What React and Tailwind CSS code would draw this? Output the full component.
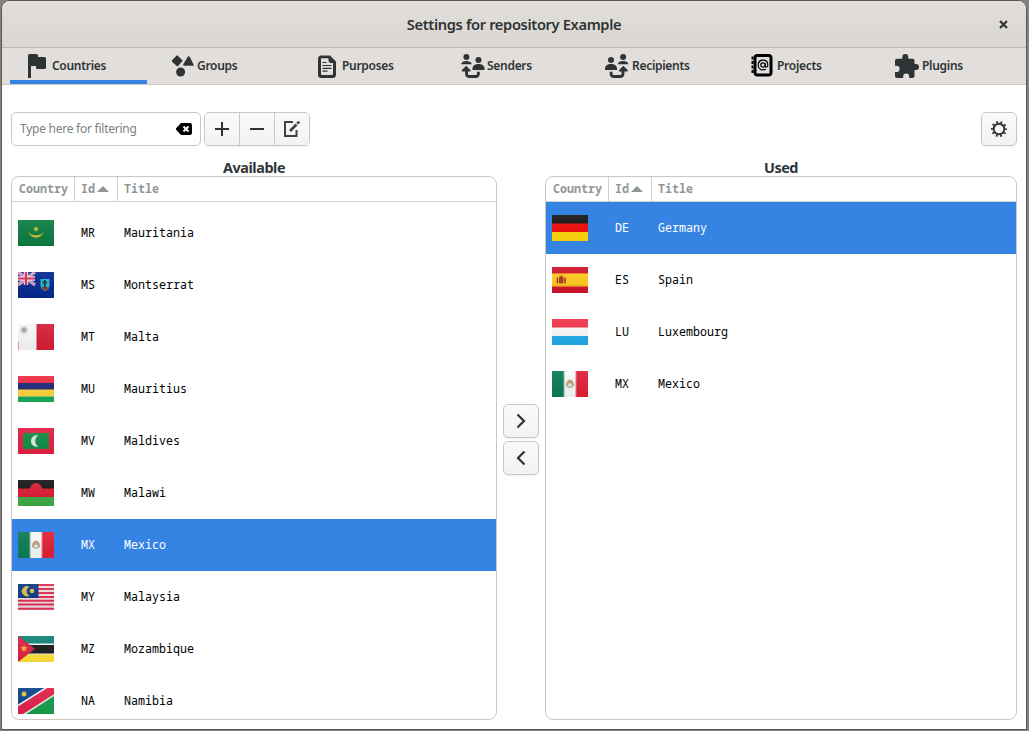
const MONO = "font-['Noto_Sans_Mono','DejaVu_Sans_Mono',monospace]";
const NARROW = 'inline-block origin-left scale-x-[0.932] text-[12.5px] leading-4 whitespace-nowrap';

function TabIcon({ name, className }) {
  return (
    <svg width="24" height="24" viewBox="0 0 24 24" fill="#2e3436" className={`shrink-0 ${className}`}>
      {name === 'flag' && <path d="M1 1.500a1.500 1.500 0 0 1 1.500-1.500H9.500a1.500 1.500 0 0 1 1.500 1.500V3H17.500a1.500 1.500 0 0 1 1.500 1.500V13.500a1.500 1.500 0 0 1-1.500 1.500H10.500a1.500 1.500 0 0 1-1.500-1.500V12H4V24H1z" />}
      {name === 'groups' && (
        <>
          <path d="M5.300 1.300 10.300 6.300a.7.7 0 0 1 0 1L6.300 11.700a1.200 1.200 0 0 1-1.800 0L-.2 7.500a.7.7 0 0 1 0-1L4.400 1.700a1.200 1.200 0 0 1 .9-.4z" />
          <path d="M15.600 3a1.200 1.200 0 0 1 2.200 0L21.500 10.200a1 1 0 0 1-.9 1.600H12.200a1 1 0 0 1-.9-1.600z" />
          <circle cx="8.600" cy="18" r="4.500" />
        </>
      )}
      {name === 'purposes' && (
        <>
          <path fillRule="evenodd" d="M4.500 1.500H13L19 7.500V20.500a3.500 3.500 0 0 1-3.500 3.500H4.500A3.500 3.500 0 0 1 1 20.500V5A3.500 3.500 0 0 1 4.500 1.500zM5 4.300a1 1 0 0 0-1 1V20a1 1 0 0 0 1 1H15a1 1 0 0 0 1-1V9H13.500A2.500 2.500 0 0 1 11.500 7V4.300z" />
          <path d="M5.500 8.500h4M5.500 11.500h9M5.500 14.300h9M5.500 17.200h5" stroke="#2e3436" strokeWidth="1.200" fill="none" />
        </>
      )}
      {(name === 'senders' || name === 'recipients') && (
        <g transform={name === 'recipients' ? 'translate(23.500 0) scale(-1 1)' : undefined}>
          <circle cx="5.400" cy="3" r="3" />
          <path d="M0 10.200C.8 8 2.500 6.900 5.400 6.900s4.600 1.100 5.500 3.300z" />
          <circle cx="17.500" cy="6" r="3" />
          <path d="M11.500 16v-1.500c0-2.700 2.400-4.500 6-4.500s6 1.800 6 4.500V16z" />
          <path d="M5.200 11.800 9.800 16.600 9.200 17.600H7v2c0 1 .5 1.500 1.500 1.500h6c1 0 1.500-.5 1.500-1.500v-1.800h2.800v2c0 2.700-1.500 4.200-4.200 4.200H8.300C5.500 24 4.100 22.500 4.100 19.800v-2.200H1.100L.5 16.600z" />
        </g>
      )}
      {name === 'projects' && (
        <>
          <rect x="4" y="1.500" width="16" height="19.500" rx="2.500" fill="none" stroke="#000" strokeWidth="3" />
          <path d="M1.500 2.500v3M1.500 7v3M1.500 11.500v3M1.500 16v3" stroke="#000" strokeWidth="2" />
          <circle cx="12" cy="11" r="2.200" fill="none" stroke="#000" strokeWidth="1.200" />
          <path d="M14.200 9v3c0 1.600 2.600 1.600 2.600-1 0-2.900-2-4.800-4.800-4.800S7.200 8.200 7.200 11s2 4.900 4.800 4.900c1 0 2-.3 2.800-.8" fill="none" stroke="#000" strokeWidth="1.200" />
        </>
      )}
      {name === 'plugins' && <path d="M0 7V6.500A2 2 0 0 1 2 4.700H7.300V3a3 3 0 0 1 6 0v1.700h4.500A2 2 0 0 1 19.500 6.500V10h1.500a2.900 2.900 0 0 1 0 6H19.500v6a2 2 0 0 1-2 2h-3.300v-1.500a3 3 0 0 0-6 0V24H2a2 2 0 0 1-2-2v-4h1.500a3 3 0 0 0 0-6.200H0z" />}
    </svg>
  );
}

const TABS = [
  ['flag', 'Countries', 'mr-px'],
  ['groups', 'Groups', 'mr-px'],
  ['purposes', 'Purposes', 'mr-px'],
  ['senders', 'Senders', '-ml-px mr-0.5'],
  ['recipients', 'Recipients', '-ml-0.5 mr-[3px]'],
  ['projects', 'Projects', '-ml-px mr-0.5'],
  ['plugins', 'Plugins', '-ml-0.5 mr-[3px]'],
];

const star = (cx, cy, r) =>
  Array.from({ length: 10 }, (_, i) => {
    const a = (Math.PI * i) / 5 - Math.PI / 2;
    const q = i % 2 ? r * 0.5 : r;
    return `${cx + q * Math.cos(a)},${cy + q * Math.sin(a)}`;
  }).join(' ');

const FLAGS = {
  MR: (
    <>
      <rect width="36" height="26" fill="#0b7d41" />
      <path d="M10.500 11.500A7.600 7.600 0 0 0 25.500 11.500 7.700 4.800 0 0 1 10.500 11.500z" fill="#d4bd32" />
      <polygon points={star(18, 9, 3)} fill="#d4bd32" />
    </>
  ),
  MS: (
    <>
      <rect width="36" height="26" fill="#052a90" />
      <path d="M0 0 17 13M17 0 0 13" stroke="#dfc6dc" strokeWidth="3" />
      <path d="M0 0 17 13M17 0 0 13" stroke="#d0557d" strokeWidth="1" />
      <path d="M8 0V13M0 6.500H17" stroke="#eed9e6" strokeWidth="4.500" />
      <path d="M8 0V13M0 6.500H17" stroke="#d52e5c" strokeWidth="2.200" />
      <path d="M22.500 7h9v7q-.5 4-4.500 5-4-1-4.500-5z" fill="#25b4d8" />
      <path d="M23 15h8q-1 3-4 4-3-1-4-4z" fill="#8b4a32" />
      <path d="M26.800 8v8M24.500 10.500h4.500" stroke="#183b35" strokeWidth="1.800" />
    </>
  ),
  MT: (
    <>
      <rect width="36" height="26" fill="#f8f8f8" />
      <rect x="18" width="18" height="26" fill="#d61f38" />
      <path d="M18.500 0V26M.4 18V26" stroke="#ef8997" />
      <circle cx="6" cy="6" r="4" fill="#dedbd8" />
      <circle cx="6" cy="6" r="2.400" fill="#aaa49f" />
    </>
  ),
  MU: (
    <>
      <rect width="36" height="7" fill="#f02d44" />
      <rect y="7" width="36" height="7" fill="#222879" />
      <rect y="13.500" width="36" height="7" fill="#ffd339" />
      <rect y="20.500" width="36" height="5.500" fill="#19ac59" />
    </>
  ),
  MV: (
    <>
      <rect width="36" height="26" fill="#e61e43" />
      <rect x="5" y="5" width="26" height="16" fill="#118d46" stroke="#8d5b42" strokeWidth=".6" />
      <path d="M20.500 7.500a5.800 5.800 0 1 0 0 11 6.300 6.300 0 0 1 0-11z" fill="#d5ece0" />
    </>
  ),
  MW: (
    <>
      <rect width="36" height="9" fill="#171719" />
      <rect y="8.500" width="36" height="9" fill="#da1b31" />
      <rect y="17" width="36" height="9" fill="#40ab45" />
      <path d="M12 9a6 6 0 0 1 12 0z" fill="#d61f35" />
    </>
  ),
  MX: (
    <>
      <rect width="36" height="26" fill="#f8f8f6" />
      <rect width="12" height="26" fill="#0c7c54" />
      <rect x="24" width="12" height="26" fill="#df2037" />
      <path d="M12 0V26" stroke="#7bb99f" />
      <path d="M24 0V26" stroke="#ed7e8c" />
      <path d="M14.500 13.500q.5 2.500 3.500 2.500t3.500-2.500" fill="none" stroke="#b3c199" strokeWidth="1.600" />
      <path d="M14 14q0-3.500 3-5.200h2q3 1.700 3 5.200l-2 .8-1-3-1 2.200-1-2.200-1 3z" fill="#bd9f7c" />
    </>
  ),
  MY: (
    <>
      <rect width="36" height="26" fill="#f4dbe2" />
      <path d="M0 1H36M0 5H36M0 9H36M0 13H36M0 16.700H36M0 20.500H36M0 24.700H36" stroke="#db3052" strokeWidth="2" />
      <rect width="20.500" height="14" fill="#0c3a80" />
      <path d="M11.500 3a5 5 0 1 0 0 8.500 4.600 4.600 0 0 1 0-8.500z" fill="#d5bc4d" />
      <circle cx="14" cy="7" r="2.300" fill="#d5bc4d" />
    </>
  ),
  MZ: (
    <>
      <rect width="36" height="26" fill="#f2f4f1" />
      <rect width="36" height="7.500" fill="#128477" />
      <rect y="9" width="36" height="8.500" fill="#1c1e1e" />
      <rect y="18.500" width="36" height="7.500" fill="#fee237" />
      <path d="M0 0 17 12.800 0 26z" fill="#de2142" />
      <polygon points={star(6, 12.5, 3.8)} fill="#fba431" />
    </>
  ),
  NA: (
    <>
      <rect width="36" height="26" fill="#0c438d" />
      <path d="M36 5V26H4z" fill="#179e4c" />
      <path d="M0 21.700V18L29 0h7v6L6 26H0z" fill="#e4204a" />
      <path d="M-1 18.200 28.500-.5M5 27 37 6.500" stroke="#f4eef0" strokeWidth="1.600" />
      <circle cx="6" cy="6" r="2.500" fill="#dfc244" />
    </>
  ),
  DE: (
    <>
      <rect width="36" height="9" fill="#171718" />
      <rect y="8.500" width="36" height="9" fill="#ee0b0a" />
      <rect y="17" width="36" height="9" fill="#ffd60b" />
    </>
  ),
  ES: (
    <>
      <rect width="36" height="26" fill="#d0142b" />
      <rect y="6.500" width="36" height="13" fill="#ffca1f" />
      <path d="M0 6.500H36M0 19.200H36" stroke="#f07b20" />
      <path d="M5.500 10.500v6M13 10.500v6" stroke="#a83818" strokeWidth="1.500" />
      <rect x="7" y="10" width="4.500" height="6.500" rx="1" fill="#b23b1b" />
      <path d="M6.500 10q2.700-3 5.400 0z" fill="#c05420" />
    </>
  ),
  LU: (
    <>
      <rect width="36" height="9" fill="#ef3548" />
      <rect y="8.500" width="36" height="9" fill="#f9f9f9" />
      <rect y="17" width="36" height="9" fill="#21abe8" />
    </>
  ),
};

function Flag({ id }) {
  const g = `shade-${id}`;
  return (
    <svg width="36" height="26" viewBox="0 0 36 26" className="shrink-0">
      <defs>
        <linearGradient id={g} x1="0" y1="0" x2="0" y2="1">
          <stop offset="0" stopColor="#fff" stopOpacity=".07" />
          <stop offset="1" stopColor="#000" stopOpacity=".05" />
        </linearGradient>
      </defs>
      {FLAGS[id]}
      <rect width="36" height="26" fill={`url(#${g})`} />
    </svg>
  );
}

function Row({ id, title, selected }) {
  return (
    <div className={`flex h-[52px] shrink-0 items-center pl-1.5 ${selected ? 'bg-[#3584e4] text-white' : 'text-black'}`}>
      <Flag id={id} />
      <div className="mb-px ml-[27px] flex">
        <div className="flex w-[43px]"><span className={NARROW}>{id}</span></div>
        <div className="flex"><span className={NARROW}>{title}</span></div>
      </div>
    </div>
  );
}

function CountryList({ rows, selected, scrolled }) {
  return (
    <div className={`flex min-h-0 flex-1 flex-col overflow-hidden rounded-lg border border-[#cdc7c2] bg-white ${MONO}`}>
      <div className="flex h-[25px] shrink-0 border-b border-[#d5d0cc] font-bold text-[#929595]">
        <div className="flex w-[63px] items-center overflow-hidden border-r border-[#d5d0cc] pl-[7px]"><span className={NARROW}>Country</span></div>
        <div className="flex w-[43px] items-center border-r border-[#d5d0cc] pl-1.5">
          <div className="flex w-4 shrink-0"><span className={NARROW}>Id</span></div>
          <svg width="12" height="6" viewBox="0 0 12 6" fill="#929595" className="shrink-0"><path d="M0 6 6 0l6 6z" /></svg>
        </div>
        <div className="flex items-center pl-1.5"><span className={NARROW}>Title</span></div>
      </div>
      <div className={`flex min-h-0 flex-1 flex-col overflow-hidden ${scrolled ? 'pt-[5px]' : ''}`}>
        {rows.map(([id, title]) => <Row key={id} id={id} title={title} selected={id === selected} />)}
      </div>
    </div>
  );
}

const AVAILABLE = [
  ['MR', 'Mauritania'], ['MS', 'Montserrat'], ['MT', 'Malta'], ['MU', 'Mauritius'], ['MV', 'Maldives'],
  ['MW', 'Malawi'], ['MX', 'Mexico'], ['MY', 'Malaysia'], ['MZ', 'Mozambique'], ['NA', 'Namibia'],
];
const USED = [['DE', 'Germany'], ['ES', 'Spain'], ['LU', 'Luxembourg'], ['MX', 'Mexico']];

const BTN = 'flex items-center justify-center border-[#cdc7c2] bg-linear-to-b from-[#fafafa] to-[#f4f2f1] text-[#2e3436]';
const SINGLE = 'h-[34px] w-9 rounded-[5px] border shadow-[0_1px_2px_rgba(0,0,0,0.07)]';
const HEADING = 'flex h-5 shrink-0 items-center justify-center pt-1 text-[14.4px] font-bold tracking-[-0.42px]';

export default function App() {
  return (
    <div className="h-[731px] w-[1029px] overflow-hidden bg-[#858382] pt-px pl-0.5 font-['Noto_Sans',sans-serif] text-[#2e3436]">
      <div className="flex h-[728px] w-[1024px] flex-col overflow-hidden rounded-t-lg bg-white shadow-[0_0_0_1px_#595756]">
        <header className="flex h-[47px] shrink-0 items-center border-b border-[#bfb8b1] bg-linear-to-b from-[#e1dedb] to-[#dad6d2]">
          <h1 className="flex-1 pl-7 text-center text-[14.67px] font-semibold tracking-[-0.35px]">Settings for repository Example</h1>
          <button className="mr-[17px] flex h-6 w-[11px] items-center justify-center">
            <svg width="9" height="9" viewBox="0 0 9 9"><path d="M1 1 8 8M8 1 1 8" stroke="#2e3436" strokeWidth="2.200" /></svg>
          </button>
        </header>
        <nav className="flex h-[37px] shrink-0 gap-2 border-b border-[#cdc7c2] bg-[#e1dedb] px-2">
          {TABS.map(([icon, label, shift], i) => (
            <div key={label} className={`flex w-[137px] items-center border-b-4 pt-[3px] pl-[17px] ${i === 0 ? 'border-[#3584e4]' : 'border-transparent'}`}>
              <TabIcon name={icon} className={shift} />
              <span className="pt-px text-[12px] font-semibold tracking-[-0.29px]">{label}</span>
            </div>
          ))}
        </nav>
        <main className="flex min-h-0 flex-1 flex-col pr-[9px] pb-[9px] pl-[9px]">
          <div className="mt-[27px] flex h-[34px] shrink-0 items-center gap-[3px]">
            <div className="flex h-full w-[190px] items-center justify-between rounded-[5px] border border-[#cdc7c2] px-2 text-[12px] tracking-[-0.25px] text-[#7c8081]">
              <span>Type here for filtering</span>
              <svg width="16" height="12" viewBox="0 0 16 12">
                <path d="M5 0h9a2 2 0 0 1 2 2v8a2 2 0 0 1-2 2H5L.5 7.200a1.700 1.700 0 0 1 0-2.400z" fill="#000" />
                <path d="m7.500 3.500 5 5m0-5-5 5" stroke="#fff" strokeWidth="1.900" />
              </svg>
            </div>
            <div className="flex h-full overflow-hidden rounded-[5px] border border-[#cdc7c2] shadow-[0_1px_2px_rgba(0,0,0,0.07)]">
              <button className={`${BTN} w-[35px] border-r`}><svg width="14" height="14" viewBox="0 0 14 14"><path d="M7 0v14M0 7h14" stroke="currentColor" strokeWidth="2" /></svg></button>
              <button className={`${BTN} w-[35px] border-r`}><svg width="14" height="14" viewBox="0 0 14 14"><path d="M0 7h14" stroke="currentColor" strokeWidth="2" /></svg></button>
              <button className={`${BTN} w-[34px]`}>
                <svg width="16" height="16" viewBox="0 0 16 16" fill="none" stroke="#3d4244">
                  <path d="M9 1H1v14h11.500V9" strokeWidth="2" />
                  <path d="m6 10 6.500-6.500" strokeWidth="2.600" />
                  <path d="m13.200 2.700 2-2" strokeWidth="2.600" />
                </svg>
              </button>
            </div>
            <button className={`${BTN} ${SINGLE} ml-auto`}>
              <svg width="16" height="16" viewBox="0 0 16 16" fill="none" stroke="#2e3436">
                <circle cx="8" cy="8" r="5.300" strokeWidth="1.900" />
                <circle cx="8" cy="8" r="7" strokeWidth="2" strokeDasharray="1.800 2.598" strokeDashoffset=".9" />
              </svg>
            </button>
          </div>
          <div className="mt-2.5 flex min-h-0 flex-1 gap-1.5">
            <section className="flex w-[486px] flex-col">
              <h2 className={HEADING}>Available</h2>
              <CountryList rows={AVAILABLE} selected="MX" scrolled />
            </section>
            <div className="flex w-9 flex-col justify-center gap-[3px] pt-0.5">
              <button className={`${BTN} ${SINGLE}`}><svg width="10" height="16" viewBox="0 0 10 16" fill="none"><path d="m1.500 1.500 6.500 6.500-6.500 6.500" stroke="currentColor" strokeWidth="2.200" /></svg></button>
              <button className={`${BTN} ${SINGLE}`}><svg width="10" height="16" viewBox="0 0 10 16" fill="none"><path d="M8.500 1.500 2 8l6.500 6.500" stroke="currentColor" strokeWidth="2.200" /></svg></button>
            </div>
            <section className="flex flex-1 flex-col">
              <h2 className={HEADING}>Used</h2>
              <CountryList rows={USED} selected="DE" />
            </section>
          </div>
        </main>
      </div>
    </div>
  );
}
